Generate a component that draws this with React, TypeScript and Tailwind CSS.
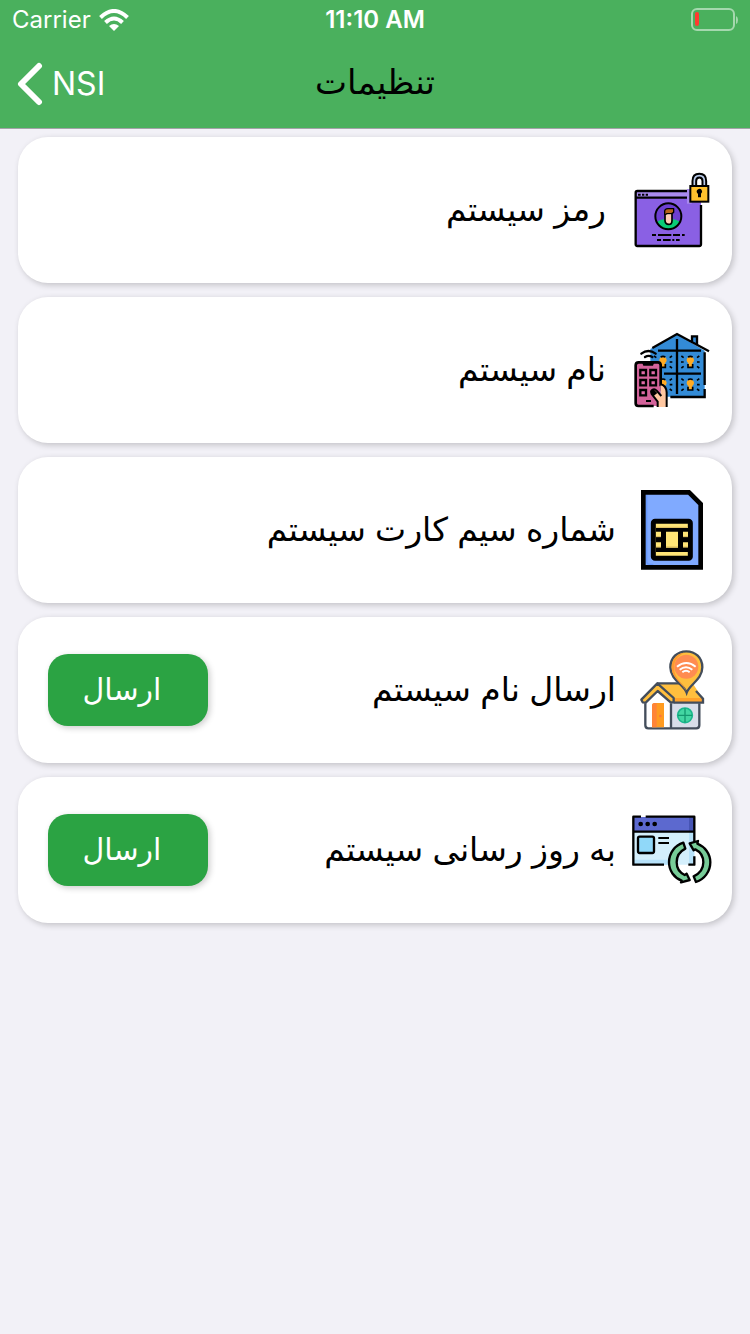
import type { ReactNode } from "react";
import clsx from "clsx";

function PasswordIcon() {
  return (
    <svg viewBox="36 15 240 240" className="h-20 w-20 shrink-0" aria-hidden="true">
      <rect x="47" y="78" width="196" height="165" rx="5" fill="#8a60e4" />
      <path d="M47 80h160v20H47z" fill="#a98bee" />
      <path d="M201 78H52q-5 0-5 5v155q0 5 5 5h186q5 0 5-5V120M47 98h154" fill="none" stroke="#000" strokeWidth="7" />
      <path d="M54 89h8M66 89h7M77 89h7" stroke="#000" strokeWidth="6" />
      <circle cx="145" cy="154" r="39" fill="#6d3fd0" />
      <path d="M111 172q6-8 22-9h24q16 1 22 9-8 21-34 21t-34-21z" fill="#09cc76" />
      <path d="M135 140h21v27q0 11-10 11t-11-11z" fill="#ffcfb8" stroke="#000" strokeWidth="5" />
      <path d="M134 148v-8q0-9 10-9h17v11l-6 4h-15v2z" fill="#b8641b" stroke="#000" strokeWidth="4" strokeLinejoin="round" />
      <path d="M138 149h15v15h-15z" fill="#ffcfb8" />
      <circle cx="145" cy="154" r="39" fill="none" stroke="#000" strokeWidth="6" />
      <path d="M96 210h12M114 210h40M159 210h21M186 210h8M111 225h12M129 225h23M157 225h6M168 225h11" stroke="#000" strokeWidth="6" />
      <path d="M201 72h14v44h-14z" fill="#a98bee" />
      <path d="M223 64V48q0-16 15-16t15 16v16" fill="none" stroke="#000" strokeWidth="17" />
      <path d="M223 64V48q0-16 15-16t15 16v16" fill="none" stroke="#b9cbea" strokeWidth="5" />
      <rect x="211" y="63" width="54" height="47" fill="#ffc22d" stroke="#000" strokeWidth="6" />
      <path d="M231 83a8 8 0 1 1 12 3v11h-9V87z" fill="#000" />
    </svg>
  );
}

function Bulb({ x, y }: { x: number; y: number }) {
  return (
    <g transform={`translate(${x} ${y})`}>
      <path d="M-6 14V3q-5-4-5-9 0-10 11-10T11-6q0 5-5 9v11z" fill="#ffab24" />
      <path d="M-7-16q7-4 14 0M-7 5v10H7V5" fill="none" stroke="#000" strokeWidth="5" />
      <path d="M-20-14l-7-5M20-14l7-5M-20-1h-8M20-1h8M-20 12l-7 5M20 12l7 5" stroke="#000" strokeWidth="5" />
    </g>
  );
}

function SmartHomeIcon() {
  return (
    <svg viewBox="36 15 240 240" className="h-20 w-20 shrink-0" aria-hidden="true">
      <path d="M91 72l80-44 83 49v138H91z" fill="#338bd6" />
      <path d="M216 50V34h15v26z" fill="#338bd6" />
      <path d="M97 69l74-42 96 52M216 49V34h15v26" fill="none" stroke="#000" strokeWidth="7" />
      <path d="M254 82v98M254 192v24h-103M171 42v165M114 77h129M132 146h111" fill="none" stroke="#000" strokeWidth="7" />
      <Bulb x={211} y={112} />
      <Bulb x={211} y={180} />
      <Bulb x={129} y={112} />
      <Bulb x={129} y={180} />
      <path d="M64 86q21-16 43 0M75 96q11-7 22 0" fill="none" stroke="#000" strokeWidth="7" strokeLinecap="round" />
      <rect x="47" y="112" width="75" height="131" rx="8" fill="#d4639b" />
      <path d="M101 243H55q-8 0-8-8V121q0-9 9-9h58q8 0 8 9v63" fill="none" stroke="#000" strokeWidth="8" />
      <path d="M66 112h37l-4 10H70z" fill="#000" />
      <path d="M61 135h17v16H61zM91 135h17v16H91zM61 165h17v16H61zM91 165h17v16H91zM61 195h17v16H61z" fill="#e16aa7" stroke="#000" strokeWidth="7" />
      <path d="M78 228h15" stroke="#000" strokeWidth="6" />
      <path d="M113 246v-17l-17-22q-5-9 2-13 6-3 12 3l12 12v-30q16 0 19 22v45z" fill="#ffc7a0" />
      <path d="M113 246v-16l-18-23q-4-9 3-13 6-3 12 3l14 16M122 178q16 3 18 24v44" fill="none" stroke="#000" strokeWidth="6" />
      <path d="M91 199q3-8 12-4l9 9-12 10z" fill="#000" />
    </svg>
  );
}

function SimCardIcon() {
  return (
    <svg viewBox="36 30 240 240" className="h-20 w-20 shrink-0" aria-hidden="true">
      <path d="M70 37h137l35 35v190H70z" fill="#80aaff" stroke="#000" strokeWidth="14" />
      <path d="M80 45v198q0 10 10 10h10" fill="none" stroke="#689aff" strokeWidth="4" />
      <rect x="100" y="124" width="111" height="111" rx="5" fill="#ffe577" stroke="#000" strokeWidth="15" />
      <path d="M108 144h96v72h-96z" fill="#000" />
      <path d="M138 155h36v48h-36zM108 155h15v16h-15zM108 187h15v15h-15zM189 155h15v16h-15zM189 187h15v15h-15z" fill="#ffe577" />
      <path d="M108 142h96M108 170h15M108 201h15M138 201h36M189 170h15M189 201h15" stroke="#d9b95c" strokeWidth="3" />
    </svg>
  );
}

function HouseLocationIcon() {
  return (
    <svg viewBox="36 30 240 240" className="h-20 w-20 shrink-0" aria-hidden="true">
      <path d="M76 185l37-30 40 30v80H85q-9 0-9-9z" fill="#fff" />
      <path d="M153 185h85v71q0 9-9 9h-76z" fill="#d8dde9" />
      <path d="M110 130h108l30 46v11h-87z" fill="#ffbf3e" />
      <path d="M163 174h83v12h-83z" fill="#ffa12a" />
      <path d="M76 190v66q0 9 9 9h144q9 0 9-9v-66M153 190v75" fill="none" stroke="#434d5b" strokeWidth="7" />
      <path d="M96 262v-65q0-8 8-8h28v73z" fill="#ff9b20" />
      <path d="M96 262v-65q0-8 8-8h6v73z" fill="#ff8437" />
      <circle cx="121" cy="228" r="4" fill="#ff743d" />
      <path d="M64 179l48-49 49 44v13h-9l-39-34-36 35-9-1z" fill="#ffbf3e" stroke="#434d5b" strokeWidth="7" strokeLinejoin="round" />
      <path d="M112 130h72M228 153l21 23v12h-88" fill="none" stroke="#434d5b" strokeWidth="7" />
      <path d="M200 158c-8-24-49-39-49-76 0-29 21-48 48-48s48 19 48 48c0 37-38 51-47 76z" fill="#ffbf3e" stroke="#434d5b" strokeWidth="7" />
      <path d="M199 156c-8-24-44-39-44-74 0-25 17-42 38-44-20 10-31 24-31 45 0 34 32 49 37 73z" fill="#ff9931" />
      <circle cx="199" cy="80" r="36" fill="#ff8c51" />
      <path d="M171 80q28-22 56 0M179 89q19-15 38 0M187 97q11-9 22 0" fill="none" stroke="#fff" strokeWidth="6" />
      <circle cx="195" cy="226" r="22" fill="#43d6a2" stroke="#19b78c" strokeWidth="5" />
      <path d="M195 205v42M174 226h42" stroke="#14986f" strokeWidth="4" />
    </svg>
  );
}

function UpdateIcon() {
  return (
    <svg viewBox="36 15 240 240" className="h-20 w-20 shrink-0" aria-hidden="true">
      <path d="M40 36h183v143H40z" fill="#d4effc" />
      <path d="M40 164h110v15H40zM207 79h16v100h-16z" fill="#b7e2fa" />
      <path d="M40 36h183v43H40z" fill="#5c69cf" />
      <path d="M207 36h16v43h-16z" fill="#4654b4" />
      <path d="M63 35H40v144h92M77 35h146v78M40 80h183M223 154v25h-18" fill="none" stroke="#000" strokeWidth="7" strokeLinejoin="round" />
      <circle cx="62" cy="57" r="7" />
      <circle cx="83" cy="57" r="7" />
      <circle cx="104" cy="57" r="7" />
      <rect x="54" y="95" width="48" height="49" rx="5" fill="#90d8f9" stroke="#000" strokeWidth="7" />
      <path d="M115 99h32M115 114h32" stroke="#000" strokeWidth="6" />
      <path d="M190 113c-25 8-43 31-43 59 0 25 15 46 38 55l-2 5 26-7-9-19-6 4c-15-7-24-21-24-38 0-18 10-33 26-41z" fill="#77cc98" stroke="#000" strokeWidth="7" strokeLinejoin="round" />
      <path d="M234 108l-25 7 12 21 5-3c14 7 24 21 24 39s-11 34-29 42l7 17c25-8 43-31 43-59 0-25-16-47-39-56z" fill="#77cc98" stroke="#000" strokeWidth="7" strokeLinejoin="round" />
    </svg>
  );
}

type SettingCardProps = {
  icon: ReactNode;
  label: string;
  inset?: boolean;
  action?: string;
};

function SettingCard({ icon, label, inset, action }: SettingCardProps) {
  return (
    <li className="flex h-[146px] items-center rounded-[30px] bg-white pr-5 pl-[30px] shadow-[2px_2px_6px_rgba(0,0,0,0.2)]">
      {icon}
      <span className={clsx("pb-0.5 text-[33px] leading-10 text-black", inset ? "mr-[26px]" : "mr-4")}>{label}</span>
      {action && (
        <button
          type="button"
          aria-label={`${action} - ${label}`}
          className="mr-auto h-[72px] w-40 rounded-[20px] bg-[#2ba343] pr-3 pb-0.5 text-[30px] leading-10 text-white shadow-[2px_2px_6px_rgba(0,0,0,0.2)]"
        >
          {action}
        </button>
      )}
    </li>
  );
}

function StatusBar() {
  return (
    <div className="grid h-10 grid-cols-3 items-center px-3 text-2xl text-white">
      <div className="flex items-center gap-2">
        <span>Carrier</span>
        <svg viewBox="0 0 30 22" className="h-[22px] w-[30px]" fill="none" stroke="#fff" strokeWidth="4" aria-label="Wi-Fi">
          <path d="M1.500 8.500q13.500-13 27 0M6.500 13.500q8.500-8 17 0" />
          <path d="M10 17q5-4 10 0l-5 5z" fill="#fff" stroke="none" />
        </svg>
      </div>
      <span className="text-center font-semibold">11:10 AM</span>
      <svg viewBox="0 0 48 24" className="h-6 w-12 justify-self-end" aria-label="Battery low">
        <rect x="2" y="1" width="42" height="21" rx="5" fill="none" stroke="#fff" strokeOpacity="0.5" strokeWidth="2" />
        <rect x="5" y="4" width="4" height="14" rx="2" fill="#ff3b30" />
        <path d="M46 8q2 1 2 4t-2 4z" fill="#fff" fillOpacity="0.5" />
      </svg>
    </div>
  );
}

export default function App() {
  return (
    <div className="min-h-screen bg-[#f2f1f7] font-['Inter','DejaVu_Sans',sans-serif]">
      <header className="border-b border-[#a3a3a8] bg-[#4ab05d]">
        <StatusBar />
        <div className="grid h-[88px] grid-cols-3 items-center px-4">
          <a href="#nsi" className="flex items-center gap-2 text-[32px] leading-10 text-white">
            <svg viewBox="0 0 28 44" className="h-11 w-7" fill="none" stroke="#fff" strokeWidth="6" strokeLinecap="round" strokeLinejoin="round" aria-hidden="true">
              <path d="M23 4L5 22l18 18" />
            </svg>
            NSI
          </a>
          <h1 dir="rtl" lang="fa" className="pb-1 text-center text-[34px] leading-10 font-medium text-black">
            تنظیمات
          </h1>
        </div>
      </header>

      <main dir="rtl" lang="fa" className="px-[18px] pt-2">
        <ul className="flex flex-col gap-[14px]">
          <SettingCard icon={<PasswordIcon />} label="رمز سیستم" inset />
          <SettingCard icon={<SmartHomeIcon />} label="نام سیستم" inset />
          <SettingCard icon={<SimCardIcon />} label="شماره سیم کارت سیستم" />
          <SettingCard icon={<HouseLocationIcon />} label="ارسال نام سیستم" action="ارسال" />
          <SettingCard icon={<UpdateIcon />} label="به روز رسانی سیستم" action="ارسال" />
        </ul>
      </main>
    </div>
  );
}
